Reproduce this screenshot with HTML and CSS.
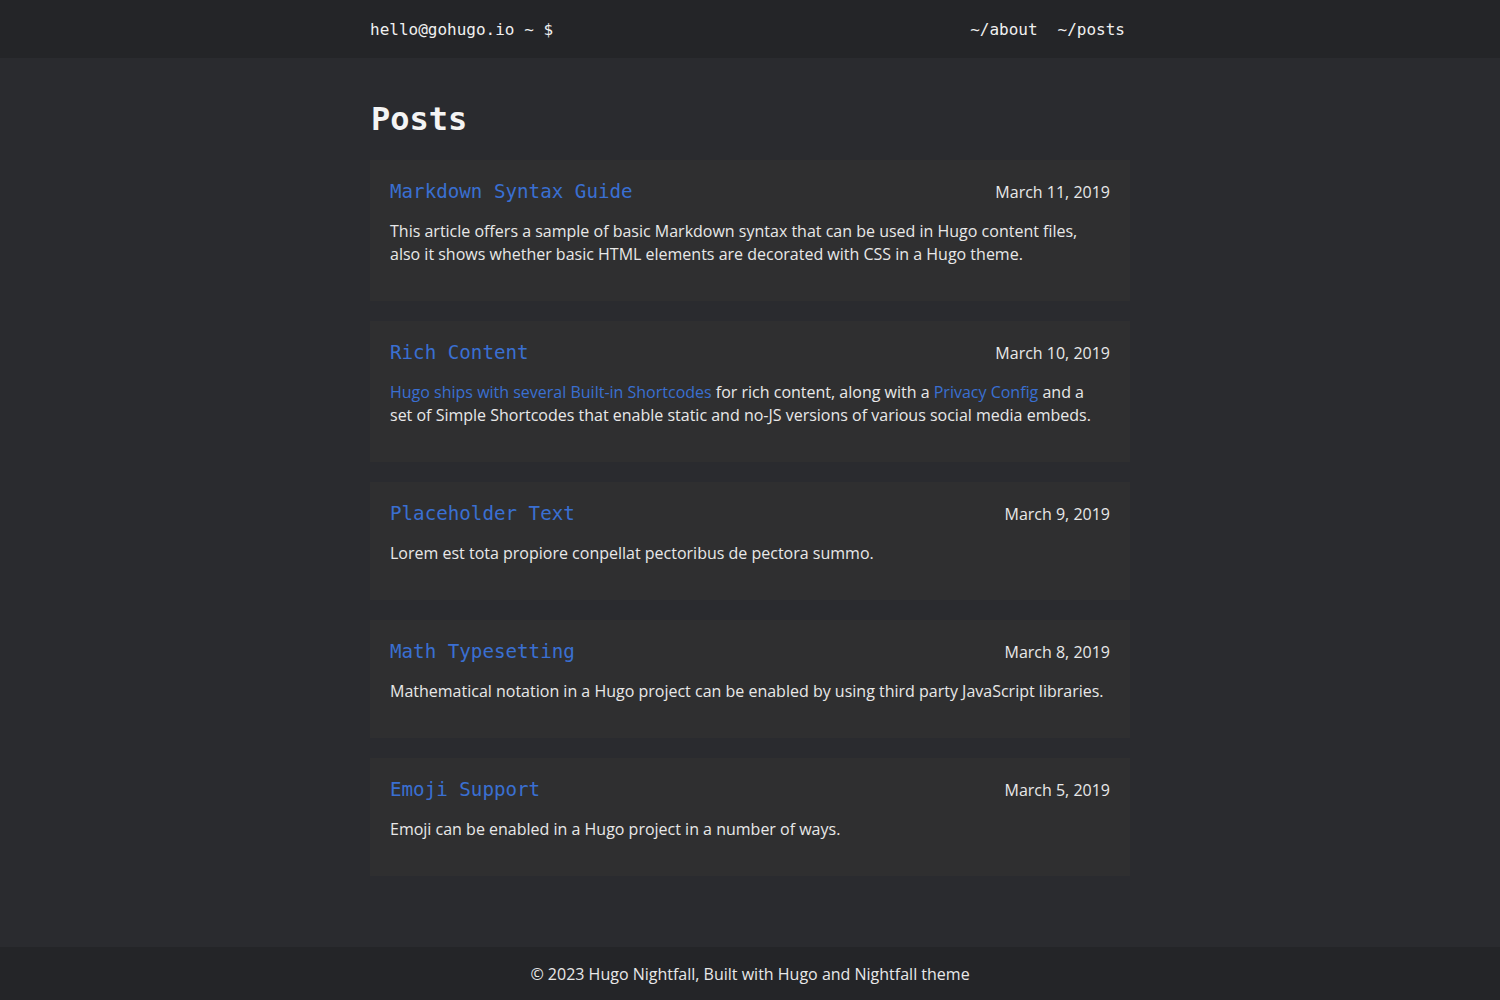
FILE: index.html
```html
<!DOCTYPE html>
<html lang="en">
<head>
<meta charset="utf-8">
<title>Posts | Hugo Nightfall</title>
<link rel="stylesheet" href="styles.css">
</head>
<body>
<header class="site-header">
  <div class="container header-inner">
    <a class="brand" href="#">hello@gohugo.io ~ $</a>
    <nav class="nav">
      <a href="#">~/about</a>
      <a href="#">~/posts</a>
    </nav>
  </div>
</header>
<main class="container main">
  <h1 class="page-title">Posts</h1>
  <div class="post-list">
    <article class="post">
      <div class="post-head">
        <a class="post-title" href="#">Markdown Syntax Guide</a>
        <span class="post-date">March 11, 2019</span>
      </div>
      <p class="post-summary">This article offers a sample of basic Markdown syntax that can be used in Hugo content files, also it shows whether basic HTML elements are decorated with CSS in a Hugo theme.</p>
    </article>
    <article class="post">
      <div class="post-head">
        <a class="post-title" href="#">Rich Content</a>
        <span class="post-date">March 10, 2019</span>
      </div>
      <p class="post-summary"><a href="#">Hugo ships with several Built-in Shortcodes</a> for rich content, along with a <a href="#">Privacy Config</a> and a set of Simple Shortcodes that enable static and no-JS versions of various social media embeds.</p>
    </article>
    <article class="post">
      <div class="post-head">
        <a class="post-title" href="#">Placeholder Text</a>
        <span class="post-date">March 9, 2019</span>
      </div>
      <p class="post-summary">Lorem est tota propiore conpellat pectoribus de pectora summo.</p>
    </article>
    <article class="post">
      <div class="post-head">
        <a class="post-title" href="#">Math Typesetting</a>
        <span class="post-date">March 8, 2019</span>
      </div>
      <p class="post-summary">Mathematical notation in a Hugo project can be enabled by using third party JavaScript libraries.</p>
    </article>
    <article class="post">
      <div class="post-head">
        <a class="post-title" href="#">Emoji Support</a>
        <span class="post-date">March 5, 2019</span>
      </div>
      <p class="post-summary">Emoji can be enabled in a Hugo project in a number of ways.</p>
    </article>
  </div>
</main>
<footer class="site-footer">
  <p>© 2023 Hugo Nightfall, Built with Hugo and Nightfall theme</p>
</footer>
</body>
</html>
```

FILE: styles.css
```css
* { box-sizing: border-box; }
html, body { margin: 0; padding: 0; }
body {
  background: #2a2b2f;
  color: #e8e8e8;
  font-family: "Open Sans", "Noto Sans", sans-serif;
  font-size: 16px;
  line-height: 23px;
  min-height: 1000px;
  display: flex;
  flex-direction: column;
}
a { color: #3a6fd2; text-decoration: none; }
.container { width: 760px; margin: 0 auto; }

.site-header { background: #242528; height: 58px; }
.header-inner {
  height: 58px;
  display: flex;
  align-items: center;
  justify-content: space-between;
  padding-right: 5px;
  font-family: "DejaVu Sans Mono", "Liberation Mono", monospace;
  font-size: 16px;
}
.brand { color: #f0f0f0; }
.nav { display: flex; gap: 20px; }
.nav a { color: #f0f0f0; }

.main { flex: 1; padding-bottom: 71px; }
.page-title {
  font-family: "DejaVu Sans Mono", "Liberation Mono", monospace;
  font-size: 32px;
  line-height: 40px;
  font-weight: bold;
  margin: 41px 0 21px 1px;
  color: #f4f4f4;
}
.post-list { display: flex; flex-direction: column; gap: 20px; }
.post { background: #2f2f30; padding: 21px 20px 19px; }
.post-head {
  display: flex;
  justify-content: space-between;
  align-items: center;
  height: 22px;
}
.post-title {
  font-family: "DejaVu Sans Mono", "Liberation Mono", monospace;
  font-size: 19.2px;
  line-height: 22px;
}
.post-date { color: #e8e8e8; }
.post-summary { margin: 17px 0 16px; }

.site-footer {
  background: #242528;
  height: 53px;
  display: flex;
  align-items: center;
  justify-content: center;
}
.site-footer p { margin: 0; position: relative; top: 1px; }
```
